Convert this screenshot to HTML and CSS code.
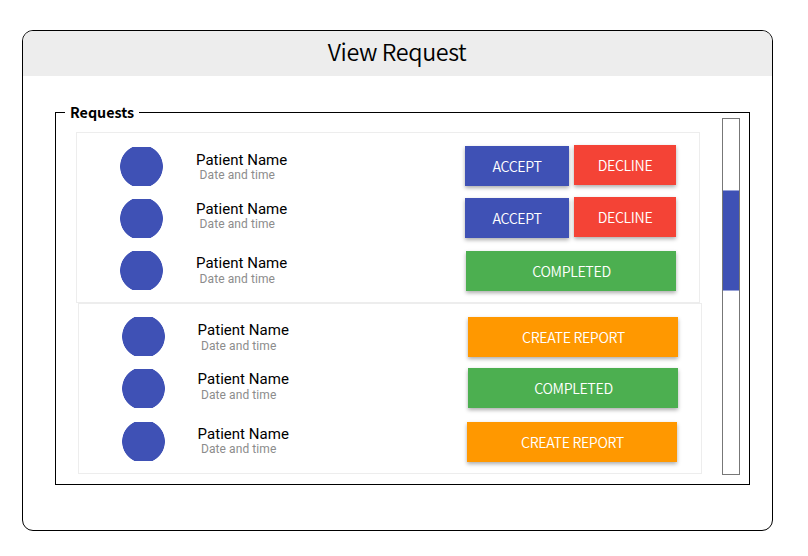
FILE: index.html
```
<!DOCTYPE html>
<html lang="en">
<head>
<meta charset="utf-8">
<title>View Request</title>
<link rel="stylesheet" href="styles.css">
</head>
<body>
<main class="window">
  <header class="window-header"><h1>View Request</h1></header>
  <section class="requests">
    <h2 class="legend">Requests</h2>
    <div class="groups">
      <div class="group">
        <article class="row">
          <div class="avatar"></div>
          <div class="patient"><p class="name">Patient Name</p><p class="date">Date and time</p></div>
          <div class="actions"><button class="btn accept">ACCEPT</button><button class="btn decline">DECLINE</button></div>
        </article>
        <article class="row">
          <div class="avatar"></div>
          <div class="patient raised"><p class="name">Patient Name</p><p class="date">Date and time</p></div>
          <div class="actions"><button class="btn accept">ACCEPT</button><button class="btn decline">DECLINE</button></div>
        </article>
        <article class="row">
          <div class="avatar"></div>
          <div class="patient level"><p class="name">Patient Name</p><p class="date">Date and time</p></div>
          <div class="actions"><button class="btn wide completed">COMPLETED</button></div>
        </article>
      </div>
      <div class="group second">
        <article class="row">
          <div class="avatar"></div>
          <div class="patient spaced"><p class="name">Patient Name</p><p class="date">Date and time</p></div>
          <div class="actions"><button class="btn wide report">CREATE REPORT</button></div>
        </article>
        <article class="row">
          <div class="avatar"></div>
          <div class="patient raised spaced"><p class="name">Patient Name</p><p class="date">Date and time</p></div>
          <div class="actions lifted"><button class="btn wide completed">COMPLETED</button></div>
        </article>
        <article class="row last">
          <div class="avatar"></div>
          <div class="patient level close"><p class="name">Patient Name</p><p class="date">Date and time</p></div>
          <div class="actions"><button class="btn wide report">CREATE REPORT</button></div>
        </article>
      </div>
    </div>
    <div class="scrollbar"><div class="thumb"></div></div>
  </section>
</main>
</body>
</html>
```
FILE: styles.css
```
* { box-sizing: border-box; margin: 0; padding: 0; }

body {
  background: #fff;
  color: #000;
  font-family: "Noto Sans CJK SC", sans-serif;
}

.window {
  width: 751px;
  height: 501px;
  margin: 30px 0 0 22px;
  border: 1px solid #000;
  border-radius: 11px;
  overflow: hidden;
}

.window-header {
  height: 45px;
  padding-right: 1px;
  background: #ededed;
  text-align: center;
}

.window-header h1 {
  font-size: 23.3px;
  font-weight: 350;
  line-height: 41px;
  letter-spacing: -0.38px;
}

.requests {
  display: flex;
  position: relative;
  width: 695px;
  height: 373px;
  margin: 36px 0 0 32px;
  border: 1px solid #000;
}

.legend {
  position: absolute;
  left: 9px;
  top: -12px;
  width: 74px;
  padding-left: 5px;
  background: #fff;
  font-size: 14.3px;
  font-weight: 700;
  line-height: 22px;
}

.groups { margin: 19px 0 0 20px; }

.group {
  width: 624px;
  height: 171px;
  padding: 14px 0 0 43px;
  border: 1px solid #ededed;
}

.second {
  margin-left: 2px;
  padding-top: 13px;
}

.row {
  display: flex;
  height: 52px;
}

.row.last { padding-top: 1px; height: 53px; }

.avatar {
  flex: none;
  width: 43px;
  height: 39px;
  background: radial-gradient(circle 21.5px at center, #3f51b5 21px, transparent 21.7px);
}

.patient {
  width: 302px;
  padding: 4px 0 0 33px;
  font-family: Roboto, sans-serif;
}

.raised { padding-top: 1px; }
.level { padding-top: 3px; }

.name {
  font-size: 15px;
  line-height: 18px;
  letter-spacing: 0.03px;
}

.second .name { margin-left: -0.4px; }

.date {
  padding-left: 3.6px;
  color: #8c8c8c;
  font-size: 12px;
  line-height: 12px;
  letter-spacing: 0.08px;
}

.second .date { padding-left: 3px; }
.level .date, .spaced .date { padding-top: 1px; }
.close .date { padding-top: 0; }

.actions {
  display: flex;
  flex: none;
  width: 211px;
  gap: 5px;
}

.lifted { margin-top: -1px; }

.btn {
  height: 40px;
  border: 0;
  box-shadow: 0 2px 4px rgba(0, 0, 0, 0.33);
  color: #fff;
  font-family: inherit;
  font-size: 14.2px;
  font-weight: 350;
  line-height: 40px;
  letter-spacing: -0.35px;
}

.accept { width: 104px; margin-top: -1px; background: #3f51b5; }
.decline { width: 102px; margin-top: -2px; background: #f44336; }
.wide { width: 210px; margin-left: 1px; padding-left: 1px; }
.completed { background: #4caf50; }
.report { background: #ff9800; }
.last .wide { margin-left: 0; }

.scrollbar {
  width: 18px;
  height: 357px;
  margin: 5px 0 0 20px;
  padding-top: 71px;
  border: 1px solid #777;
}

.thumb {
  height: 101px;
  border: solid #98a2d8;
  border-width: 1px 0;
  background: #3f51b5;
}
```
